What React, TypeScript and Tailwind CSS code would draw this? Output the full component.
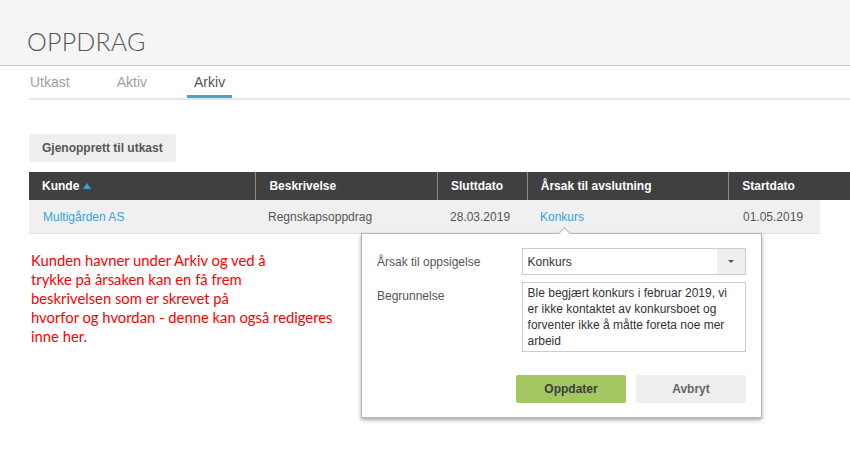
const COLUMNS = [
  { label: "Kunde", w: "w-[227px]" },
  { label: "Beskrivelse", w: "w-[182px]" },
  { label: "Sluttdato", w: "w-[90px]" },
  { label: "Årsak til avslutning", w: "w-[202px]" },
  { label: "Startdato", w: "w-[122px]" },
];

function Tabs() {
  const tabs = ["Utkast", "Aktiv", "Arkiv"];
  return (
    <div className="flex h-[32px] items-end pl-[23px]">
      <div className="flex gap-[33px]">
        {tabs.map((t) => (
          <div
            key={t}
            className={[
              "h-[32px] border-b-[3px] px-[7px] pt-[8px] text-[14px] leading-[16px]",
              t === "Arkiv" ? "border-[#46a6c8] text-[#555]" : "border-transparent text-[#a0a0a0]",
            ].join(" ")}
          >
            {t}
          </div>
        ))}
      </div>
    </div>
  );
}

function Popover() {
  return (
    <div className="absolute left-[361px] top-[133px] h-[185px] w-[401px] border border-[#b5b5b5] bg-white px-[15px] pt-[14px] shadow-[0_2px_4px_rgba(0,0,0,0.35)]">
      <div className="absolute left-[198px] top-[-5px] h-[9px] w-[9px] rotate-45 border-l border-t border-[#b5b5b5] bg-white" />
      <div className="flex flex-col gap-[7px]">
        <div className="flex items-center">
          <span className="w-[145px] text-[12px] text-[#555]">Årsak til oppsigelse</span>
          <div className="flex h-[27px] w-[225px] items-center border border-[#ccc] bg-white">
            <span className="flex-1 pl-[5px] text-[12px] text-[#333]">Konkurs</span>
            <span className="flex h-full w-[28px] items-center justify-center bg-[#eee]">
              <span className="h-0 w-0 border-x-[3px] border-t-[3px] border-x-transparent border-t-[#555]" />
            </span>
          </div>
        </div>
        <div className="flex items-start">
          <span className="w-[145px] pt-[5px] text-[12px] text-[#555]">Begrunnelse</span>
          <div className="h-[70px] w-[225px] overflow-hidden border border-[#ccc] px-[5px] pt-[2px] text-[12px] leading-[16px] text-[#333]">
            Ble begjært konkurs i februar 2019, vi er ikke kontaktet av konkursboet og forventer ikke å måtte foreta noe mer arbeid
          </div>
        </div>
      </div>
      <div className="mt-[23px] flex justify-end gap-[10px]">
        <button className="h-[28px] w-[110px] rounded-[2px] bg-[#a3c761] text-[12px] font-bold text-[#3d3d3d]">
          Oppdater
        </button>
        <button className="h-[28px] w-[110px] rounded-[2px] bg-[#eeeeee] text-[12px] font-bold text-[#666]">
          Avbryt
        </button>
      </div>
    </div>
  );
}

export default function App() {
  return (
    <div className="h-[457px] w-[850px] overflow-hidden bg-white font-['Liberation_Sans',Arial,sans-serif]">
      {/* Page header */}
      <div className="h-[66px] border-b border-[#c4c4c4] bg-[#f5f5f5] pl-[27px] pt-[28px]">
        <h1 className="font-['Lato',sans-serif] text-[25px] font-light leading-[26px] tracking-[0.2px] text-[#555]">
          OPPDRAG
        </h1>
      </div>

      <Tabs />
      <div className="ml-[29px] h-[2px] bg-[#e6e6e6]" />

      <div className="relative pl-[29px] pt-[34px]">
        <button className="h-[28px] rounded-[2px] bg-[#eeeeee] px-[13px] text-[12px] font-bold text-[#555]">
          Gjenopprett til utkast
        </button>

        {/* Table */}
        <div className="mt-[10px]">
          <div className="flex h-[28px] bg-[#404040]">
            {COLUMNS.map((c, i) => (
              <div
                key={c.label}
                className={[
                  "flex items-center px-[13px] text-[12px] font-bold text-white",
                  c.w,
                  i > 0 ? "border-l border-[#8a8a8a]" : "",
                ].join(" ")}
              >
                {c.label}
                {i === 0 && (
                  <span className="ml-[4px] h-0 w-0 border-x-[4px] border-b-[6px] border-x-transparent border-b-[#3da0d0]" />
                )}
              </div>
            ))}
          </div>
          <div className="flex h-[34px] w-[791px] items-center border-b border-[#e2e2e2] bg-[#f0f0f0] text-[12px] text-[#555]">
            <div className="w-[227px] px-[14px] text-[#3da0d0]">Multigården AS</div>
            <div className="w-[182px] pl-[12px]">Regnskapsoppdrag</div>
            <div className="w-[90px] pl-[12px]">28.03.2019</div>
            <div className="w-[202px] pl-[12px] text-[#3da0d0]">Konkurs</div>
            <div className="w-[90px] pl-[13px]">01.05.2019</div>
          </div>
        </div>

        <p className="mt-[17px] pl-[2px] font-['Lato',sans-serif] text-[14.8px] leading-[19px] text-[#ff0000]">
          Kunden havner under Arkiv og ved å<br />
          trykke på årsaken kan en få frem<br />
          beskrivelsen som er skrevet på<br />
          hvorfor og hvordan - denne kan også redigeres<br />
          inne her.
        </p>

        <Popover />
      </div>
    </div>
  );
}
